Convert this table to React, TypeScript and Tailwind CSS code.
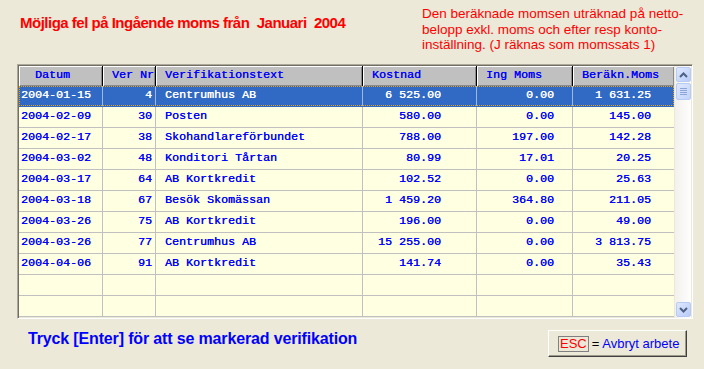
import React from "react";

type Row = { datum: string; ver: string; text: string; kostnad: string; ing: string; berakn: string };

const rows: Row[] = [
  { datum: "2004-01-15", ver: "4", text: "Centrumhus AB", kostnad: "6 525.00", ing: "0.00", berakn: "1 631.25" },
  { datum: "2004-02-09", ver: "30", text: "Posten", kostnad: "580.00", ing: "0.00", berakn: "145.00" },
  { datum: "2004-02-17", ver: "38", text: "Skohandlareförbundet", kostnad: "788.00", ing: "197.00", berakn: "142.28" },
  { datum: "2004-03-02", ver: "48", text: "Konditori Tårtan", kostnad: "80.99", ing: "17.01", berakn: "20.25" },
  { datum: "2004-03-17", ver: "64", text: "AB Kortkredit", kostnad: "102.52", ing: "0.00", berakn: "25.63" },
  { datum: "2004-03-18", ver: "67", text: "Besök Skomässan", kostnad: "1 459.20", ing: "364.80", berakn: "211.05" },
  { datum: "2004-03-26", ver: "75", text: "AB Kortkredit", kostnad: "196.00", ing: "0.00", berakn: "49.00" },
  { datum: "2004-03-26", ver: "77", text: "Centrumhus AB", kostnad: "15 255.00", ing: "0.00", berakn: "3 813.75" },
  { datum: "2004-04-06", ver: "91", text: "AB Kortkredit", kostnad: "141.74", ing: "0.00", berakn: "35.43" },
  { datum: "", ver: "", text: "", kostnad: "", ing: "", berakn: "" },
  { datum: "", ver: "", text: "", kostnad: "", ing: "", berakn: "" },
];

const headCell =
  "h-full flex items-center border-r border-black shadow-[inset_1px_1px_0_#ffffff,inset_-1px_-1px_0_#8a8a8a] bg-[#c0c0c0] text-[#0000ff] whitespace-pre";

const ScrollButton = ({ up }: { up: boolean }) => (
  <div className="w-[15px] h-[15px] mx-auto rounded-[2px] border border-[#b7cbf6] bg-gradient-to-br from-[#dfe8fd] to-[#b8cbf8] flex items-center justify-center">
    <svg width="9" height="6" viewBox="0 0 9 6">
      <path
        d={up ? "M1 5 L4.5 1.5 L8 5" : "M1 1 L4.5 4.5 L8 1"}
        fill="none"
        stroke="#4d6185"
        strokeWidth="2"
      />
    </svg>
  </div>
);

export default function App() {
  return (
    <div className="w-[704px] h-[369px] bg-[#ece9d8] overflow-hidden flex flex-col font-['Liberation_Sans',Arial,sans-serif]">
      {/* Header */}
      <div className="h-[64px] flex">
        <div className="pl-[20px] pt-[14px] text-[15px] leading-[18px] font-bold tracking-[-0.5px] text-[#ff0000] whitespace-pre">
          Möjliga fel på Ingående moms från  Januari  2004
        </div>
        <div className="ml-auto mr-[10px] w-[272px] pt-[6px] text-[13.5px] leading-[15.5px] text-[#ff0000]">
          Den beräknade momsen uträknad på netto-
          <br />
          belopp exkl. moms och efter resp konto-
          <br />
          inställning. (J räknas som momssats 1)
        </div>
      </div>

      {/* Grid */}
      <div className="ml-[17px] w-[676px] h-[255px] border-t border-l border-[#aca899] border-r border-b border-r-white border-b-white">
        <div className="w-full h-full border-t border-l border-[#716f64] flex font-['Liberation_Mono','Courier_New',monospace] text-[11.67px] [text-shadow:0.3px_0_0_currentColor]">
          <div className="w-[655px] flex flex-col">
            <div className="h-[20px] flex">
              <div className={`${headCell} w-[84px] pl-[16px]`}>Datum</div>
              <div className={`${headCell} w-[53px] pl-[9px]`}>Ver Nr</div>
              <div className={`${headCell} w-[207px] pl-[9px]`}>Verifikationstext</div>
              <div className={`${headCell} w-[114px] pl-[9px]`}>Kostnad</div>
              <div className={`${headCell} w-[96px] pl-[9px]`}>Ing Moms</div>
              <div className={`${headCell} w-[101px] pl-[9px] border-r-0`}>Beräkn.Moms</div>
            </div>
            {rows.map((r, i) => {
              const sel = i === 0;
              const cell = `h-full flex items-center border-r whitespace-pre ${sel ? "border-[#9fb6de]" : "border-[#c0c0c0]"}`;
              return (
                <div
                  key={i}
                  className={`relative h-[21px] flex border-b ${
                    sel ? "bg-[#316ac5] text-white border-[#316ac5]" : "bg-[#ffffe1] text-[#0000ff] border-[#c0c0c0]"
                  }`}
                >
                  {sel && <div className="absolute inset-0 border border-dotted border-[#e0a020] pointer-events-none" />}
                  <div className={`${cell} w-[84px] pl-[2px]`}>{r.datum}</div>
                  <div className={`${cell} w-[53px] justify-end pr-[3px]`}>{r.ver}</div>
                  <div className={`${cell} w-[207px] pl-[9px]`}>{r.text}</div>
                  <div className={`${cell} w-[114px] justify-end pr-[35px]`}>{r.kostnad}</div>
                  <div className={`${cell} w-[96px] justify-end pr-[18px]`}>{r.ing}</div>
                  <div className={`${cell} w-[101px] justify-end pr-[23px] border-r-0`}>{r.berakn}</div>
                </div>
              );
            })}
          </div>
          {/* Scrollbar */}
          <div className="w-[17px] h-full flex flex-col bg-gradient-to-r from-[#f3f1ec] to-[#fefefe] border-l border-[#ece9d8] pt-[1px] pb-[1px]">
            <ScrollButton up />
            <div className="mt-[1px] w-[15px] h-[17px] mx-auto rounded-[2px] border border-[#b7cbf6] bg-gradient-to-br from-[#dfe8fd] to-[#c1d3fb] flex flex-col items-center justify-center gap-[1px]">
              <div className="w-[7px] h-[1px] bg-[#8ca4d8]" />
              <div className="w-[7px] h-[1px] bg-[#8ca4d8]" />
              <div className="w-[7px] h-[1px] bg-[#8ca4d8]" />
              <div className="w-[7px] h-[1px] bg-[#8ca4d8]" />
            </div>
            <div className="flex-1" />
            <ScrollButton up={false} />
          </div>
        </div>
      </div>

      {/* Footer */}
      <div className="mt-[11px] flex items-start">
        <div className="pl-[28px] text-[16px] leading-[18px] font-bold tracking-[-0.15px] text-[#0000ff]">
          Tryck [Enter] för att se markerad verifikation
        </div>
        <button className="ml-auto mr-[17px] w-[139px] h-[27px] bg-[#ece9d8] border border-t-white border-l-white border-r-[#404040] border-b-[#404040] shadow-[inset_-1px_-1px_0_#9d9a8c] flex items-center pl-[9px] text-[13px] leading-[15px]">
          <span className="h-[16px] px-[1px] border border-[#808080] text-[#ff0000] flex items-center">ESC</span>
          <span className="ml-[3px] text-black">=</span>
          <span className="ml-[3px] text-[#0000ff]">Avbryt arbete</span>
        </button>
      </div>
    </div>
  );
}
